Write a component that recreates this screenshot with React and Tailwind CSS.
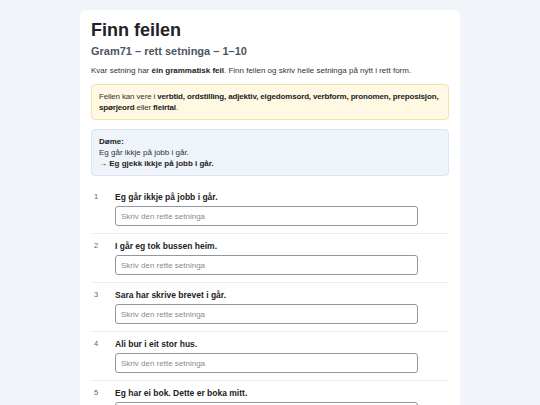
const items = [
  'Eg går ikkje på jobb i går.',
  'I går eg tok bussen heim.',
  'Sara har skrive brevet i går.',
  'Ali bur i eit stor hus.',
  'Eg har ei bok. Dette er boka mitt.',
  'Kvar du bur?',
  'Han kan snakkar norsk.',
  'Vi gjekk til butikken i morgon.',
  'Eg liker katten hennar sin.',
  'Det er to bil i garasjen.',
]

function Item({ n, text, first }) {
  return (
    <li className={`flex pt-[6px] pb-[7px] ${first ? 'pt-[7px]' : 'border-t border-[#eceef1]'}`}>
      <span className="w-[24px] shrink-0 pl-[3px] text-[7.5px] leading-[12px] text-[#5f6368]">{n}</span>
      <div className="flex-1">
        <p className="text-[8.5px] leading-[12px] font-bold text-[#222]">{text}</p>
        <input
          type="text"
          placeholder="Skriv den rette setninga"
          className="block mt-[3px] w-[303px] h-[20px] rounded-[3px] border-[1.5px] border-[#8e97a3] px-[5px] text-[8px] text-[#333] placeholder:text-[#8a8a8a] outline-none"
        />
      </div>
    </li>
  )
}

export default function App() {
  return (
    <div className="min-h-screen bg-[#f1f5f9] pt-[10px] pb-10" style={{ fontFamily: "'Liberation Sans', Arial, sans-serif" }}>
      <div className="mx-auto w-[380px] bg-white rounded-[6px] px-[11px] pt-[9px] pb-4">
        <h1 className="text-[18px] leading-[22px] font-bold text-[#1f2328]">Finn feilen</h1>
        <h2 className="mt-[3px] text-[11px] leading-[14px] font-bold text-[#4b5563]">Gram71 – rett setninga – 1–10</h2>
        <p className="mt-[7px] text-[8px] leading-[11px] text-[#333]">
          Kvar setning har <b className="text-[#222]">éin grammatisk feil</b>. Finn feilen og skriv heile setninga på nytt i rett form.
        </p>
        <div className="mt-[8px] rounded-[4px] border border-[#f3e2a9] bg-[#fff8e3] px-[7px] py-[6px] text-[8px] leading-[11px] tracking-[-0.15px] text-[#333]">
          Feilen kan vere i <b className="text-[#222]">verbtid, ordstilling, adjektiv, eigedomsord, verbform, pronomen, preposisjon, spørjeord</b> eller <b className="text-[#222]">fleirtal</b>.
        </div>
        <div className="mt-[9px] rounded-[4px] border border-[#d9e5f1] bg-[#eef4fa] px-[7px] py-[6px] text-[8px] leading-[11px] text-[#333]">
          <p className="font-bold text-[#222]">Døme:</p>
          <p>Eg går ikkje på jobb i går.</p>
          <p className="font-bold text-[#222]">→ Eg gjekk ikkje på jobb i går.</p>
        </div>
        <ol className="mt-[8px]">
          {items.map((t, i) => (
            <Item key={i} n={i + 1} text={t} first={i === 0} />
          ))}
        </ol>
      </div>
    </div>
  )
}
